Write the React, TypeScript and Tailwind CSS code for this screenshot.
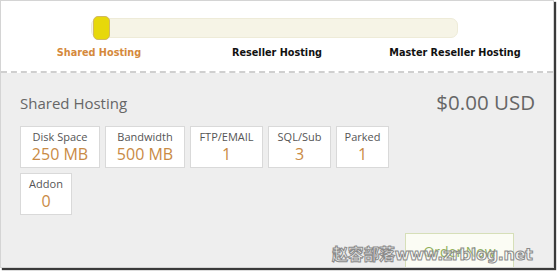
import React from "react";

const stats = [
  { label: "Disk Space", value: "250 MB", w: "w-[80px]" },
  { label: "Bandwidth", value: "500 MB", w: "w-[80px]" },
  { label: "FTP/EMAIL", value: "1", w: "w-[73px]" },
  { label: "SQL/Sub", value: "3", w: "w-[63px]" },
  { label: "Parked", value: "1", w: "w-[53px]" },
  { label: "Addon", value: "0", w: "w-[52px]" },
];

const tabs = ["Shared Hosting", "Reseller Hosting", "Master Reseller Hosting"];

export default function App() {
  return (
    <div className="w-[559px] h-[272px] bg-white">
      <div className="relative w-[554px] h-[268px] overflow-hidden border border-[#d4d4d4] bg-[#eeeeee] shadow-[2px_2px_1px_#3a3a3a]">
        {/* slider */}
        <div className="h-[72px] bg-white border-b-2 border-dashed border-[#cfcfcf] pt-[15px]">
          <div className="relative ml-[90px] w-[367px] h-[20px] mt-[2px] rounded-[7px] bg-[#f6f4e6] border border-[#eeebd8]">
            <div className="absolute left-[1px] top-[-3px] w-[17px] h-[24px] rounded-[5px] bg-[#e7d80a] border border-[#d2b962]" />
          </div>
          <div className="flex mt-[8px] font-['DejaVu_Sans',sans-serif] text-[9.7px] font-bold text-[#111]">
            <div className="w-[196px] text-center text-[#d5893c]">{tabs[0]}</div>
            <div className="w-[160px] text-center">{tabs[1]}</div>
            <div className="w-[196px] text-center">{tabs[2]}</div>
          </div>
        </div>

        {/* plan */}
        <div className="px-[19px] pt-[20px] font-['Open_Sans',sans-serif]">
          <div className="flex justify-between items-start">
            <div className="text-[15px] text-[#666] leading-[20px]">Shared Hosting</div>
            <div className="text-[20.5px] text-[#666] leading-[22px] mr-[-1px] -mt-[2px]">$0.00 USD</div>
          </div>
          <div className="flex flex-wrap gap-[5px] w-[400px] mt-[13px]">
            {stats.map((s) => (
              <div
                key={s.label}
                className={`${s.w} h-[42px] bg-white border border-[#d9d9d9] flex flex-col items-center pt-[2px]`}
              >
                <div className="text-[11px] text-[#555] leading-[15px]">{s.label}</div>
                <div className="text-[16px] text-[#c98a45] leading-[21px]">{s.value}</div>
              </div>
            ))}
          </div>
        </div>

        <button className="absolute left-[404px] top-[232px] w-[109px] h-[40px] bg-[#fbfcf4] border border-[#d6dfb8] text-[14px] text-[#8fae5a] font-['Open_Sans',sans-serif] pb-[4px]">
          Order Now
        </button>

        {/* watermark */}
        <div className="absolute left-[331px] top-[242px] text-[16px] font-bold tracking-[-0.3px] text-[rgba(255,255,255,0.45)] [-webkit-text-stroke:1px_#8a8a8a] font-['DejaVu_Sans','Noto_Sans_CJK_SC',sans-serif] whitespace-nowrap">
          赵容部落www.zrblog.net
        </div>
      </div>
    </div>
  );
}
